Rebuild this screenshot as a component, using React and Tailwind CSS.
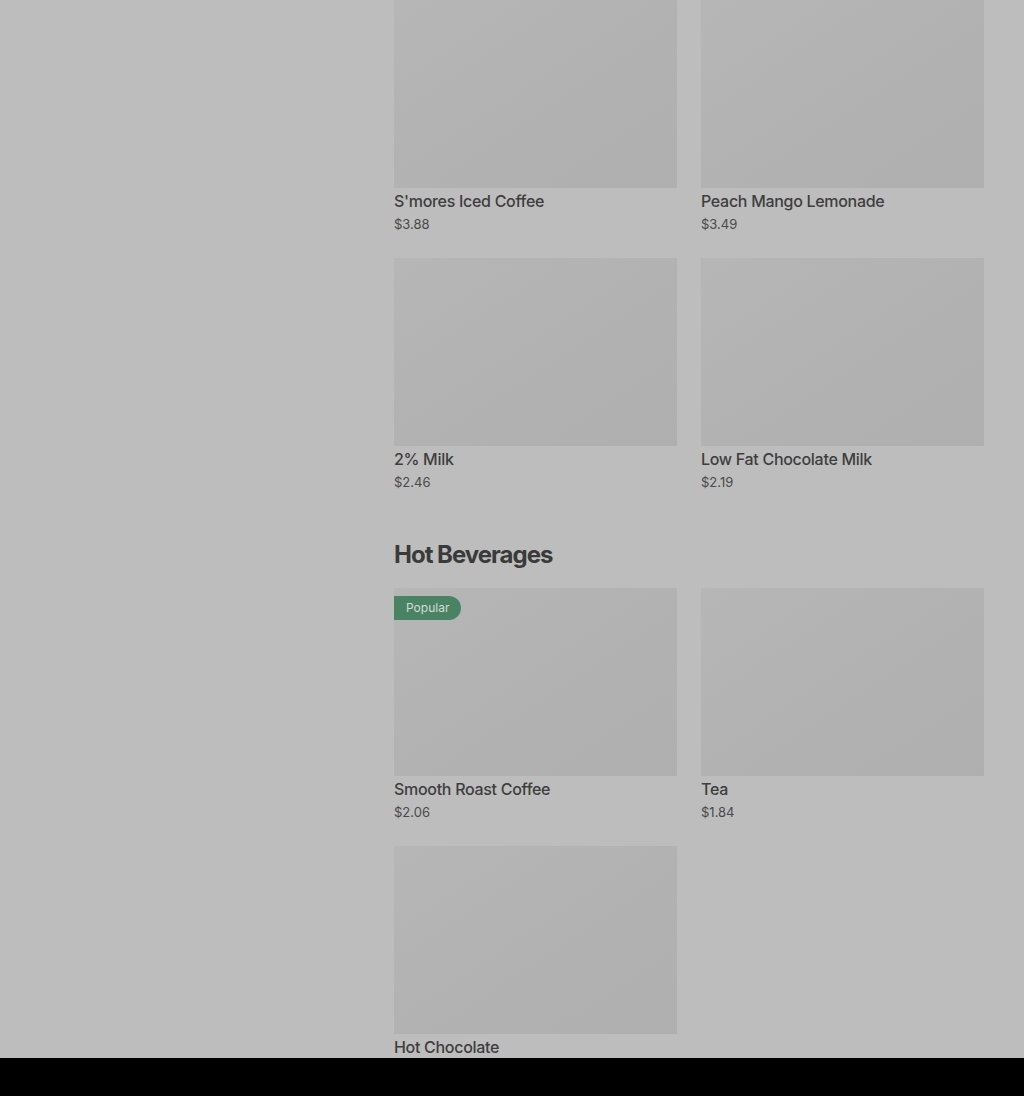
import React from 'react';

const sections = [
  {
    title: null,
    items: [
      { name: "S'mores Iced Coffee", price: '$3.88' },
      { name: 'Peach Mango Lemonade', price: '$3.49' },
      { name: '2% Milk', price: '$2.46' },
      { name: 'Low Fat Chocolate Milk', price: '$2.19' },
    ],
  },
  {
    title: 'Hot Beverages',
    items: [
      { name: 'Smooth Roast Coffee', price: '$2.06', popular: true },
      { name: 'Tea', price: '$1.84' },
      { name: 'Hot Chocolate', price: '$1.99' },
    ],
  },
];

function ItemCard({ item }) {
  return (
    <div className="flex flex-col">
      <div className="relative h-[188px] bg-gradient-to-br from-[#b6b6b6] via-[#b2b2b2] to-[#afafaf]">
        {item.popular && (
          <span className="absolute left-0 top-2 h-6 px-3 flex items-center rounded-r-full bg-[#4a8363] text-[#d3dcd6] text-[12px]">
            Popular
          </span>
        )}
      </div>
      <div className="mt-px text-[16px] leading-6 font-medium tracking-[-0.3px] text-[#3e3e3e]">{item.name}</div>
      <div className="mt-px text-[13px] leading-5 text-[#4a4a4a]">{item.price}</div>
    </div>
  );
}

export default function App() {
  return (
    <div className="min-h-screen bg-[#bdbdbd] font-['Inter',sans-serif] overflow-hidden h-[1096px]">
      <div className="ml-[394px] w-[590px] flex flex-col gap-[47px]">
        {sections.map((section, i) => (
          <div key={i} className="flex flex-col">
            {section.title && (
              <h2 className="text-[24px] leading-8 font-bold tracking-[-1px] text-[#3a3a3a] mb-[17px]">
                {section.title}
              </h2>
            )}
            <div className="grid grid-cols-2 gap-x-6 gap-y-6">
              {section.items.map((item) => (
                <ItemCard key={item.name} item={item} />
              ))}
            </div>
          </div>
        ))}
      </div>
      <div className="fixed left-0 right-0 bottom-0 h-[38px] bg-black" />
    </div>
  );
}
